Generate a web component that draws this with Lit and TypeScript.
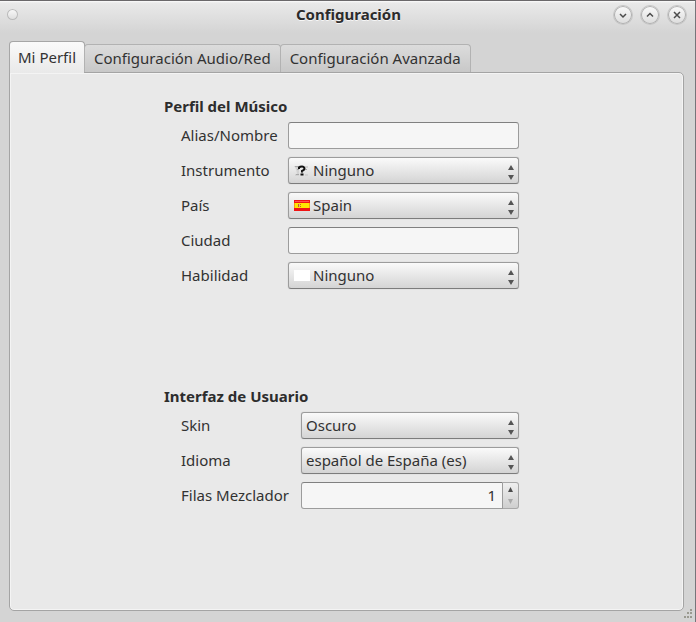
import { LitElement, html, svg, css, nothing } from "lit";
import { customElement, state } from "lit/decorators.js";
import { classMap } from "lit/directives/class-map.js";

const TABS = ["Mi Perfil", "Configuración Audio/Red", "Configuración Avanzada"];

const chevronDown = svg`<path d="M6 8l3 3 3-3" />`;
const chevronUp = svg`<path d="M6 10.500l3-3 3 3" />`;
const cross = svg`<path d="M6 6l6 6M12 6l-6 6" />`;

const questionIcon = html`<svg class="picture" width="16" height="12" viewBox="0 0 16 12" aria-hidden="true">
  <path d="M0 1h5v3H2zM1 9h4v2H1zM11 1h3v2h-3zM11 9h3v2h-3zM2 4h3v5H3z" fill="#d2d2d2" />
  <path d="M1 1.500h4M3 4.500h2M11 4.500h2M2 9.500h3" stroke="#a8a8a8" />
  <path d="M5 4V2.500Q6 1.500 8 1.500T10.500 3.500Q10.500 5 8 6V7.500" fill="none" stroke="#111" stroke-width="2" />
  <path d="M6.500 8.500h3v2h-3z" fill="#111" />
</svg>`;

const spainIcon = html`<svg class="picture" width="16" height="11" viewBox="0 0 16 11" aria-hidden="true">
  <path d="M0 0h16v11H0z" fill="#f01414" />
  <path d="M1 3h14v5H1z" fill="#ffe600" />
  <path d="M0 3h1v5H0zM15 3h1v5h-1z" fill="#f6a010" />
  <path d="M1 1h14v1H1z" fill="#ff5050" />
  <path d="M4 4h1v3H4zM6 4h1v1H6zM6 6h1v1H6z" fill="#c8641e" />
  <path d="M5 4h1v3H5z" fill="#e8b080" />
</svg>`;

const blankIcon = html`<svg class="picture" width="16" height="11" viewBox="0 0 16 11" aria-hidden="true">
  <path d="M0 0h16v11H0z" fill="#fff" />
</svg>`;

@customElement("app-root")
export class AppRoot extends LitElement {
  @state() private active = 0;
  @state() private rows = 1;

  static styles = css`
    :host {
      display: block;
      font-family: "Noto Sans", "Open Sans", sans-serif;
      font-size: 15px;
      line-height: 20px;
      color: #323232;
    }
    * {
      box-sizing: border-box;
    }
    .window {
      position: relative;
      display: flex;
      flex-direction: column;
      min-height: 100vh;
      padding: 0 11px 11px 9px;
      border-top: 1px solid #6a686a;
      border-right: 1px solid #77757a;
      background: linear-gradient(#fcfcfc 0, #e9e9e9 2px, #d4d4d4 32px) no-repeat #d4d4d4;
    }
    .titlebar {
      display: grid;
      grid-template-columns: 1fr auto 1fr;
      align-items: center;
      height: 27px;
    }
    h1 {
      margin: 0 0 0 4px;
      padding-bottom: 2px;
      font-size: 15px;
      font-weight: 700;
      color: #2b2b2b;
      text-shadow: 0 1px 0 #f6f6f6;
    }
    .winbuttons {
      display: flex;
      gap: 9px;
      justify-content: flex-end;
      margin-right: -2px;
    }
    .round {
      width: 18px;
      height: 18px;
      padding: 0;
      border: 0;
      border-radius: 50%;
      background: linear-gradient(#fafafa, #dcdcdc);
      box-shadow: 0 0 0 1px #b0b0b0 inset, 0 0 0 1px #c6c6c6;
    }
    .round svg {
      display: block;
      fill: none;
      stroke: #4c4c4c;
      stroke-width: 1.500;
    }
    .round.small {
      width: 11px;
      height: 11px;
      margin-left: -2px;
      box-shadow: 0 0 0 1px #bababa inset;
    }
    .tabs {
      display: flex;
      align-items: flex-end;
      height: 32px;
      margin-top: 13px;
      margin-bottom: -1px;
      z-index: 1;
    }
    .tab {
      height: 28px;
      margin: 0 0 1px -1px;
      padding: 0 9px 2px;
      border: 1px solid #b2b2b2;
      border-bottom: 0;
      border-radius: 4px 4px 0 0;
      background: linear-gradient(#dcdcdc, #c8c8c8);
      font: inherit;
      color: inherit;
      white-space: nowrap;
    }
    .tab.active {
      height: 32px;
      margin: 0;
      padding: 0 8px 2px;
      border-color: #a6a6a6;
      background: linear-gradient(#fafafa, #e9e9e9);
    }
    .panel {
      flex: 1;
      padding: 24px 20px 24px 10px;
      border: 1px solid #a4a4a4;
      border-radius: 0 5px 5px 5px;
      background: #e9e9e9;
      box-shadow: 0 0 0 1px #f4f4f4 inset;
    }
    form {
      max-width: 355px;
      margin: 0 auto;
    }
    fieldset {
      display: grid;
      gap: 8px;
      min-width: 0;
      margin: 0 0 98px;
      padding: 0;
      border: 0;
    }
    fieldset:last-child {
      margin: 0;
    }
    legend {
      margin-bottom: 5px;
      padding: 0 0 2px;
      line-height: 18px;
      font-weight: 700;
      color: #2d2d2d;
    }
    .row {
      display: grid;
      grid-template-columns: 100px 1fr;
      column-gap: 7px;
      align-items: center;
      padding-left: 17px;
    }
    .wide .row {
      grid-template-columns: 113px 1fr;
    }
    label {
      padding-bottom: 2px;
      white-space: nowrap;
    }
    .field {
      position: relative;
      display: flex;
      height: 27px;
    }
    input,
    select {
      width: 100%;
      min-width: 0;
      margin: 0;
      border: 1px solid #9c9c9c;
      border-radius: 3px;
      font: inherit;
      color: inherit;
      appearance: none;
    }
    input {
      padding: 0 6px 2px;
      border-top-color: #808080;
      background: #f6f6f6;
      appearance: textfield;
    }
    input::-webkit-inner-spin-button {
      appearance: none;
    }
    select {
      padding: 0 20px 2px 4px;
      border-bottom-color: #7c7c7c;
      background: linear-gradient(#fafafa, #d4d4d4);
      box-shadow: 0 0 1px #aaa;
    }
    .pictured select {
      padding-left: 24px;
    }
    .picture {
      position: absolute;
      left: 6px;
      top: 8px;
      pointer-events: none;
    }
    .arrows {
      position: absolute;
      right: 5px;
      top: 8px;
      pointer-events: none;
    }
    .spin input {
      border-radius: 3px 0 0 3px;
      text-align: right;
    }
    .steps {
      display: grid;
      flex: 0 0 16px;
      border: 1px solid #a8a8a8;
      border-left: 0;
      border-radius: 0 3px 3px 0;
      background: linear-gradient(#efefef, #cfcfcf);
    }
    .steps button {
      display: grid;
      place-items: center;
      min-height: 0;
      padding: 0;
      border: 0;
      background: none;
      color: #4c4c4c;
    }
    .steps button:disabled {
      color: #aaa;
    }
    .steps svg {
      display: block;
    }
    .grip {
      position: absolute;
      right: 3px;
      bottom: 4px;
    }
  `;

  private select(id: string, label: string, options: string[], picture: unknown = nothing) {
    return html`<div class="row">
      <label for=${id}>${label}</label>
      <div class=${classMap({ field: true, pictured: picture !== nothing })}>
        <select id=${id}>
          ${options.map((o) => html`<option>${o}</option>`)}
        </select>
        ${picture}
        <svg class="arrows" width="6" height="15" viewBox="0 0 6 15" fill="#555" aria-hidden="true">
          <path d="M3 0l3 5H0zM0 10h6l-3 5z" />
        </svg>
      </div>
    </div>`;
  }

  private text(id: string, label: string) {
    return html`<div class="row">
      <label for=${id}>${label}</label>
      <div class="field"><input id=${id} type="text" /></div>
    </div>`;
  }

  private windowButton(label: string, shape: unknown) {
    return html`<button class="round" aria-label=${label}>
      <svg width="18" height="18" viewBox="0 0 18 18">${shape}</svg>
    </button>`;
  }

  render() {
    return html`<div class="window">
      <header class="titlebar">
        <button class="round small" aria-label="Menú"></button>
        <h1>Configuración</h1>
        <div class="winbuttons">
          ${this.windowButton("Minimizar", chevronDown)}
          ${this.windowButton("Maximizar", chevronUp)}
          ${this.windowButton("Cerrar", cross)}
        </div>
      </header>
      <div class="tabs" role="tablist">
        ${TABS.map(
          (t, i) => html`<button
            role="tab"
            aria-selected=${i === this.active}
            class=${classMap({ tab: true, active: i === this.active })}
            @click=${() => (this.active = i)}
          >${t}</button>`
        )}
      </div>
      <main class="panel" role="tabpanel">
        ${this.active === 0
          ? html`<form>
              <fieldset>
                <legend>Perfil del Músico</legend>
                ${this.text("alias", "Alias/Nombre")}
                ${this.select("instrument", "Instrumento", ["Ninguno"], questionIcon)}
                ${this.select("country", "País", ["Spain"], spainIcon)}
                ${this.text("city", "Ciudad")}
                ${this.select("skill", "Habilidad", ["Ninguno"], blankIcon)}
              </fieldset>
              <fieldset class="wide">
                <legend>Interfaz de Usuario</legend>
                ${this.select("skin", "Skin", ["Oscuro"])}
                ${this.select("language", "Idioma", ["español de España (es)"])}
                <div class="row">
                  <label for="rows">Filas Mezclador</label>
                  <div class="field spin">
                    <input id="rows" type="number" min="1" .value=${String(this.rows)} />
                    <div class="steps">
                      <button type="button" aria-label="Más" @click=${() => this.rows++}>
                        <svg width="5" height="5" viewBox="0 0 5 5" fill="currentColor"><path d="M2.500 0L5 5H0z" /></svg>
                      </button>
                      <button type="button" aria-label="Menos" ?disabled=${this.rows <= 1} @click=${() => this.rows--}>
                        <svg width="5" height="5" viewBox="0 0 5 5" fill="currentColor"><path d="M0 0h5L2.500 5z" /></svg>
                      </button>
                    </div>
                  </div>
                </div>
              </fieldset>
            </form>`
          : nothing}
      </main>
      <svg class="grip" width="9" height="9" viewBox="0 0 9 9" fill="#9a9a90" aria-hidden="true">
        <path d="M7 0h2v2H7zM4 3h2v2H4zM7 3h2v2H7zM1 7h2v2H1zM4 7h2v2H4zM7 7h2v2H7z" />
      </svg>
    </div>`;
  }
}
